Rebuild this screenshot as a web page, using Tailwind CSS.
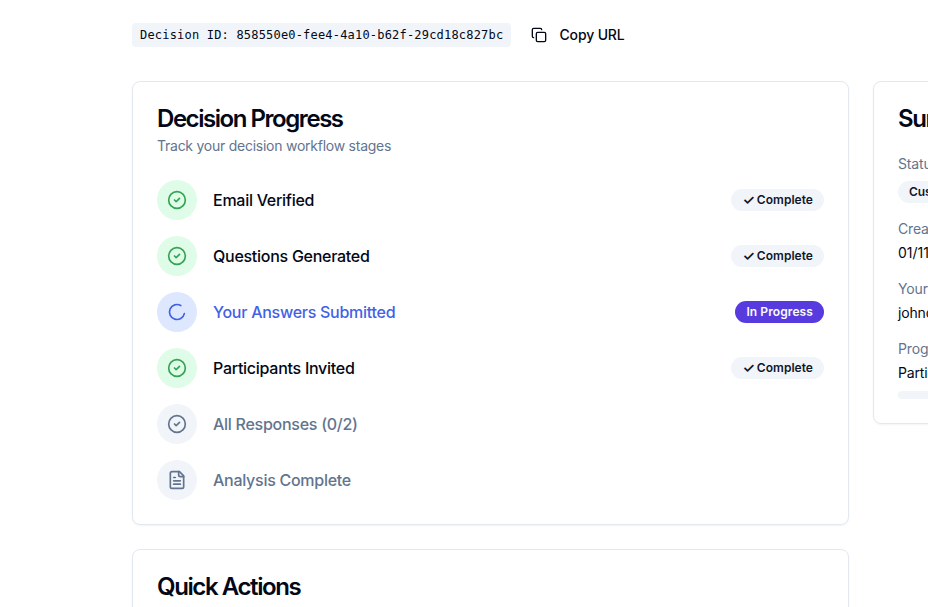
<!DOCTYPE html>
<html lang="en">
<head>
    <meta charset="UTF-8">
    <meta name="viewport" content="width=device-width, initial-scale=1.0">
    <title>Decision Progress</title>
    <script src="https://cdn.jsdelivr.net/npm/@tailwindcss/browser@4"></script>
</head>
<body class="h-screen overflow-hidden bg-white font-[Inter,sans-serif] text-[#020817]">

    <!-- Icons -->
    <svg class="hidden">
        <symbol id="check" viewBox="0 0 24 24"><circle cx="12" cy="12" r="10"/><path d="m9 12 2 2 4-4"/></symbol>
        <symbol id="loader" viewBox="0 0 24 24"><path d="M21 12a9 9 0 1 1-6.219-8.56"/></symbol>
        <symbol id="file" viewBox="0 0 24 24"><path d="M15 2H6a2 2 0 0 0-2 2v16a2 2 0 0 0 2 2h12a2 2 0 0 0 2-2V7Z"/><path d="M14 2v4a2 2 0 0 0 2 2h4"/><path d="M10 9H8"/><path d="M16 13H8"/><path d="M16 17H8"/></symbol>
        <symbol id="copy" viewBox="0 0 24 24"><rect width="14" height="14" x="8" y="8" rx="2" ry="2"/><path d="M4 16c-1.1 0-2-.9-2-2V4c0-1.1.9-2 2-2h10c1.1 0 2 .9 2 2"/></symbol>
    </svg>

    <div class="ml-[132px] w-[1087px] pt-[17px]">
        <div class="mb-7 flex h-9 items-center gap-2">
            <code class="w-[379px] whitespace-nowrap rounded bg-slate-100 px-2 py-1 font-['DejaVu_Sans_Mono',monospace] text-xs tracking-[0.19px]">Decision ID: 858550e0-fee4-4a10-b62f-29cd18c827bc</code>
            <button class="flex h-9 items-center gap-[12.5px] rounded-md px-3 text-sm font-medium tracking-[-0.15px]">
                <svg class="size-4 fill-none stroke-current stroke-2" stroke-linecap="round" stroke-linejoin="round"><use href="#copy"/></svg>
                Copy URL
            </button>
        </div>

        <div class="grid grid-cols-[717px_346px] items-start gap-6">
            <div class="space-y-6">
                <div class="rounded-lg border border-slate-200 p-6 shadow-xs">
                    <h3 class="pt-px text-2xl leading-[23px] font-semibold tracking-[-1.45px]">Decision Progress</h3>
                    <p class="mt-1.5 text-sm tracking-[-0.25px] text-slate-500">Track your decision workflow stages</p>

                    <div class="mt-6 space-y-4 font-medium tracking-[-0.27px]">
                        <div class="flex items-center gap-4">
                            <div class="flex size-10 items-center justify-center rounded-full bg-[#dffce8] text-[#36a354]">
                                <svg class="size-5 fill-none stroke-current stroke-2" stroke-linecap="round" stroke-linejoin="round"><use href="#check"/></svg>
                            </div>
                            <p class="flex-1">Email Verified</p>
                            <span class="flex h-[22px] items-center gap-[2px] rounded-full bg-slate-100 px-[11px] text-xs font-semibold tracking-[0.03px] text-slate-900"><span class="text-sm leading-none">✓</span> Complete</span>
                        </div>
                        <div class="flex items-center gap-4">
                            <div class="flex size-10 items-center justify-center rounded-full bg-[#dffce8] text-[#36a354]">
                                <svg class="size-5 fill-none stroke-current stroke-2" stroke-linecap="round" stroke-linejoin="round"><use href="#check"/></svg>
                            </div>
                            <p class="flex-1">Questions Generated</p>
                            <span class="flex h-[22px] items-center gap-[2px] rounded-full bg-slate-100 px-[11px] text-xs font-semibold tracking-[0.03px] text-slate-900"><span class="text-sm leading-none">✓</span> Complete</span>
                        </div>
                        <div class="flex items-center gap-4">
                            <div class="flex size-10 items-center justify-center rounded-full bg-[#dde8fe] text-[#4361e6]">
                                <svg class="size-5 rotate-12 fill-none stroke-current stroke-2" stroke-linecap="round" stroke-linejoin="round"><use href="#loader"/></svg>
                            </div>
                            <p class="flex-1 text-[#4361e6]">Your Answers Submitted</p>
                            <span class="flex h-[22px] items-center rounded-full bg-[#583bdf] px-[11px] text-xs font-semibold tracking-[0.1px] text-slate-50">In Progress</span>
                        </div>
                        <div class="flex items-center gap-4">
                            <div class="flex size-10 items-center justify-center rounded-full bg-[#dffce8] text-[#36a354]">
                                <svg class="size-5 fill-none stroke-current stroke-2" stroke-linecap="round" stroke-linejoin="round"><use href="#check"/></svg>
                            </div>
                            <p class="flex-1">Participants Invited</p>
                            <span class="flex h-[22px] items-center gap-[2px] rounded-full bg-slate-100 px-[11px] text-xs font-semibold tracking-[0.03px] text-slate-900"><span class="text-sm leading-none">✓</span> Complete</span>
                        </div>
                        <div class="flex items-center gap-4 text-slate-500">
                            <div class="flex size-10 items-center justify-center rounded-full bg-slate-100">
                                <svg class="size-5 fill-none stroke-current stroke-2" stroke-linecap="round" stroke-linejoin="round"><use href="#check"/></svg>
                            </div>
                            <p class="flex-1">All Responses (0/2)</p>
                        </div>
                        <div class="flex items-center gap-4 text-slate-500">
                            <div class="flex size-10 items-center justify-center rounded-full bg-slate-100">
                                <svg class="size-5 fill-none stroke-current stroke-2" stroke-linecap="round" stroke-linejoin="round"><use href="#file"/></svg>
                            </div>
                            <p class="flex-1">Analysis Complete</p>
                        </div>
                    </div>
                </div>

                <div class="rounded-lg border border-slate-200 p-6 shadow-xs">
                    <h3 class="pt-px text-2xl leading-[23px] font-semibold tracking-[-1.4px]">Quick Actions</h3>
                </div>
            </div>

            <!-- Sidebar -->
            <div class="rounded-lg border border-slate-200 p-6 shadow-xs">
                <h3 class="pt-px text-2xl leading-[23px] font-semibold tracking-[-1.4px]">Summary</h3>
                <div class="mt-6 space-y-4 text-sm tracking-[-0.15px]">
                    <div>
                        <p class="text-slate-500">Status</p>
                        <span class="mt-[7px] flex h-[22px] w-fit items-center rounded-full bg-slate-100 px-[11px] text-xs font-semibold text-slate-900">Custom</span>
                    </div>
                    <div>
                        <p class="text-slate-500">Created</p>
                        <p class="mt-1 tracking-normal">01/11/2025</p>
                    </div>
                    <div>
                        <p class="text-slate-500">Your Email</p>
                        <p class="mt-1">johndoe@example.com</p>
                    </div>
                    <div>
                        <p class="text-slate-500">Progress</p>
                        <p class="mt-1">Participants</p>
                        <div class="mt-2 h-2 rounded-full bg-slate-100"></div>
                    </div>
                </div>
            </div>
        </div>
    </div>

</body>
</html>
